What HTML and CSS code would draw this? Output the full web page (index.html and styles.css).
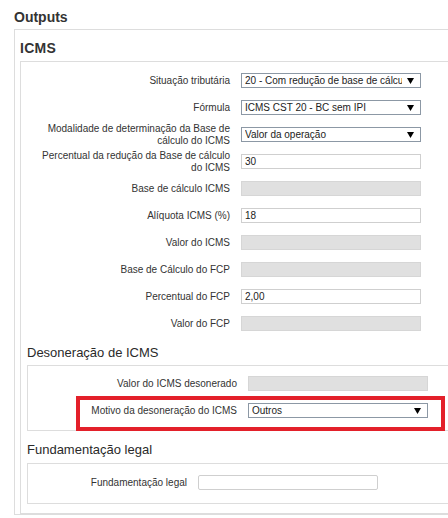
FILE: index.html
```html
<!DOCTYPE html>
<html lang="pt-BR">
<head>
<meta charset="utf-8">
<title>Outputs</title>
<link rel="stylesheet" href="styles.css">
</head>
<body>
<div class="page">
  <h1 class="title">Outputs</h1>
  <div class="outer">
    <h2 class="section-title">ICMS</h2>
    <div class="box icms">
      <div class="rows icms-rows">
        <div class="row">
          <span class="lbl">Situação tributária</span>
          <div class="field select"><span class="val">20 - Com redução de base de cálculo</span><svg class="arrow" width="7" height="6" viewBox="0 0 7 6"><polygon points="0,0 7,0 3.5,6" fill="#000"/></svg></div>
        </div>
        <div class="row">
          <span class="lbl">Fórmula</span>
          <div class="field select"><span class="val">ICMS CST 20 - BC sem IPI</span><svg class="arrow" width="7" height="6" viewBox="0 0 7 6"><polygon points="0,0 7,0 3.5,6" fill="#000"/></svg></div>
        </div>
        <div class="row">
          <span class="lbl">Modalidade de determinação da Base de<br>cálculo do ICMS</span>
          <div class="field select"><span class="val">Valor da operação</span><svg class="arrow" width="7" height="6" viewBox="0 0 7 6"><polygon points="0,0 7,0 3.5,6" fill="#000"/></svg></div>
        </div>
        <div class="row">
          <span class="lbl">Percentual da redução da Base de cálculo<br>do ICMS</span>
          <div class="field input"><span class="val">30</span></div>
        </div>
        <div class="row">
          <span class="lbl">Base de cálculo ICMS</span>
          <div class="field disabled"></div>
        </div>
        <div class="row">
          <span class="lbl">Alíquota ICMS (%)</span>
          <div class="field input"><span class="val">18</span></div>
        </div>
        <div class="row">
          <span class="lbl">Valor do ICMS</span>
          <div class="field disabled"></div>
        </div>
        <div class="row">
          <span class="lbl">Base de Cálculo do FCP</span>
          <div class="field disabled"></div>
        </div>
        <div class="row">
          <span class="lbl">Percentual do FCP</span>
          <div class="field input"><span class="val">2,00</span></div>
        </div>
        <div class="row">
          <span class="lbl">Valor do FCP</span>
          <div class="field disabled"></div>
        </div>
      </div>

      <h3 class="sub-title deson-title">Desoneração de ICMS</h3>
      <div class="box sub deson">
        <div class="row">
          <span class="lbl">Valor do ICMS desonerado</span>
          <div class="field disabled"></div>
        </div>
        <div class="row">
          <span class="lbl">Motivo da desoneração do ICMS</span>
          <div class="field select"><span class="val">Outros</span><svg class="arrow" width="7" height="6" viewBox="0 0 7 6"><polygon points="0,0 7,0 3.5,6" fill="#000"/></svg></div>
        </div>
        <div class="highlight"></div>
      </div>

      <h3 class="sub-title fund-title">Fundamentação legal</h3>
      <div class="box sub fund">
        <div class="row">
          <span class="lbl">Fundamentação legal</span>
          <div class="field input round"></div>
        </div>
      </div>
    </div>
  </div>
</div>
</body>
</html>
```

FILE: styles.css
```css
html, body {
  margin: 0;
  padding: 0;
  overflow: hidden;
  background: #fff;
}

body {
  font-family: "Liberation Sans", Arial, sans-serif;
  color: #333;
}

.page {
  padding: 9px 0 0 14px;
}

.title {
  font-size: 14px;
  font-weight: bold;
  line-height: 16px;
  margin: 0 0 4px;
  color: #333;
}

.outer {
  width: 470px;
  border: 1px solid #ddd;
  padding: 10px 0 0 5px;
}

.section-title {
  font-size: 14px;
  font-weight: bold;
  line-height: 16px;
  margin: 0 0 5px;
  color: #333;
  letter-spacing: 0.3px;
}

.box {
  border: 1px solid #ddd;
}

.icms {
  padding: 5px 0 9px 6px;
}

.row {
  display: flex;
  align-items: center;
  height: 27px;
  gap: 11px;
}

.lbl {
  flex: none;
  font-size: 10px;
  line-height: 12px;
  text-align: right;
  color: #333;
}

.icms-rows .lbl {
  width: 203px;
}

.deson .lbl {
  width: 209px;
}

.fund .lbl {
  width: 159px;
}

.field {
  flex: none;
  width: 180px;
  height: 15px;
  box-sizing: border-box;
  display: flex;
  align-items: center;
  font-size: 10px;
  color: #222;
  padding-left: 3px;
}

.val {
  flex: 1;
  min-width: 0;
  overflow: hidden;
  white-space: nowrap;
  line-height: 13px;
}

.select {
  border: 1px solid #8c98a5;
  background: #fff;
}

.arrow {
  flex: none;
  margin: 0 6px 0 5px;
}

.input {
  border: 1px solid #cfcfcf;
  background: #fff;
}

.round {
  border-radius: 2px;
}

.disabled {
  border: 1px solid #d6d6d6;
  background: #e0e0e0;
}

.sub-title {
  font-size: 13px;
  font-weight: normal;
  line-height: 15px;
  color: #2a2a2a;
}

.deson-title {
  margin: 8px 0 5px;
}

.fund-title {
  margin: 11px 0 6px;
}

.deson {
  position: relative;
  padding: 4px 0 6px;
}

.fund {
  padding: 5px 0 7px;
}

.highlight {
  position: absolute;
  left: 48px;
  top: 30px;
  width: 369px;
  height: 35px;
  box-sizing: border-box;
  border: 4px solid #e3202a;
}
```
